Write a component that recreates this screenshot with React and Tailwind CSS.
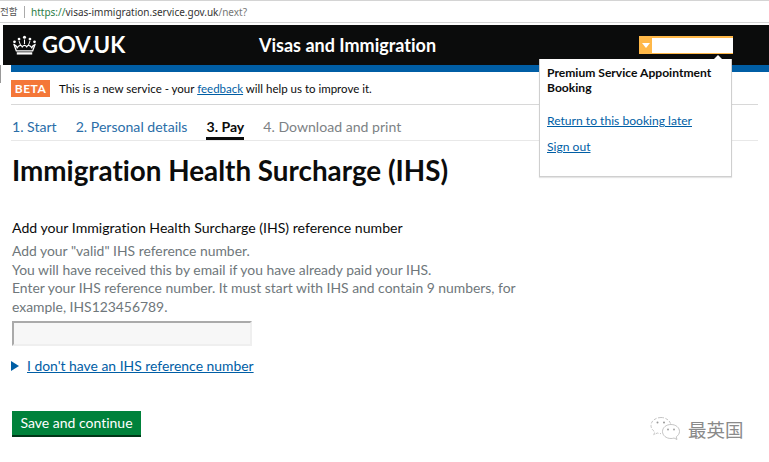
const FONT = 'font-["Lato","Liberation_Sans",sans-serif] [font-variant-ligatures:none]'

function Crown() {
  return (
    <svg viewBox="0 0 26 22" className="h-[20px] w-[25px]" fill="#fff">
      <circle cx="13" cy="2.500" r="1.700" />
      <circle cx="7" cy="4.500" r="1.500" />
      <circle cx="19" cy="4.500" r="1.500" />
      <circle cx="2" cy="7.500" r="1.500" />
      <circle cx="24" cy="7.500" r="1.500" />
      <path d="M12.400 5h1.200v5h-1.200zM6.500 6.500h1l1.600 4.500H8zM18.500 6.500h1L18 11h-1.100z" />
      <path d="M1.500 10.500c2 .5 3 2 3.500 3.500 1-1.500 2-2.500 3.500-2.500.8 0 1.500.5 2 1.500.8-1 1.600-1.500 2.500-1.500s1.700.5 2.500 1.500c.5-1 1.200-1.500 2-1.500 1.500 0 2.500 1 3.500 2.500.5-1.500 1.500-3 3.500-3.500l-2.500 7H4z" fill="none" stroke="#fff" strokeWidth="1.400" />
      <path d="M4.500 19h17v2.500h-17z" />
    </svg>
  )
}

function WeChat() {
  return (
    <svg viewBox="0 0 32 26" className="h-[26px] w-[32px]" fill="none" stroke="#b5b5b5" strokeWidth="0.8">
      <path d="M11 1.500C5.500 1.500 1 5 1 9.500c0 2.700 1.600 4.800 3.800 6.300l-1 3 3.500-1.800c1.200.4 2.500.6 3.700.6" strokeDasharray="3 1.500" />
      <path d="M11 1.500c4.500 0 8.500 2.500 9.500 6.200" strokeDasharray="3 1.500" />
      <path d="M21 8.500c-5 0-8.500 3.200-8.500 7s3.500 7 8.500 7c1 0 2-.1 3-.5l3 1.500-.8-2.600c2-1.400 3.300-3.300 3.300-5.400 0-3.800-3.500-7-8.500-7z" />
      <circle cx="7.500" cy="6.500" r="1" fill="#999" stroke="none" />
      <circle cx="14" cy="6.500" r="1" fill="#999" stroke="none" />
      <circle cx="18" cy="13.500" r="0.900" fill="#999" stroke="none" />
      <circle cx="24" cy="13.500" r="0.900" fill="#999" stroke="none" />
    </svg>
  )
}

export default function App() {
  return (
    <div className={`relative h-[462px] w-[769px] overflow-hidden bg-white ${FONT} text-[#0b0c0c]`}>
      {/* browser address bar */}
      <div className="flex h-[23px] items-center border-y border-[#d4d4d4] font-['Noto_Sans',sans-serif] text-[10px] leading-none">
        <span className="w-[18px] shrink-0 whitespace-nowrap font-['Noto_Sans_CJK_KR',sans-serif] text-[9.500px] text-[#555]">전함</span>
        <span className="ml-[6px] mr-[6px] h-[12px] w-px bg-[#aaa]" />
        <span className="text-[#2a7d46]">https://</span>
        <span className="text-[#333]">visas-immigration.service.gov.uk</span>
        <span className="text-[#777]">/next?</span>
      </div>

      {/* header */}
      <div className="ml-[3px] mt-[2px] flex h-[40px] items-center bg-[#0b0c0c] pl-[9px] pr-[36px]">
        <div className="flex w-[247px] items-center gap-[5px]">
          <Crown />
          <span className="text-[22px] font-bold leading-none text-white">GOV.UK</span>
        </div>
        <span className="text-[18px] font-bold leading-none text-white">Visas and Immigration</span>
        <div className="ml-auto flex h-[18px] w-[94px] items-center bg-[#ffb848] pl-[3px]">
          <span className="h-0 w-0 border-x-[4px] border-t-[5px] border-x-transparent border-t-white" />
          <span className="ml-[2px] h-[15px] w-[81px] bg-white" />
        </div>
      </div>

      <div className="flex h-[36px] flex-col">
        <div className="ml-[11px] h-[7px] bg-[#005ea5]" />
        <div className="mx-[11px] flex items-center gap-[9px] pt-[8px]">
          <span className="flex h-[17px] w-[39px] items-center justify-center bg-[#f47738] text-[12px] font-bold tracking-[0.5px] text-white">BETA</span>
          <span className="text-[11.500px] leading-none">
            This is a new service - your <a href="#" className="text-[#005ea5] underline">feedback</a> will help us to improve it.
          </span>
        </div>
      </div>

      <div className="mx-[11px] mt-[3px] border-t border-[#d8d8d8]">
        <div className="flex h-[36px] items-end gap-[19px] border-b border-[#e8e8e8] text-[14.100px] leading-none">
          <span className="pb-[6px] pl-px text-[#2b6ea8]">1. Start</span>
          <span className="pb-[6px] text-[#2b6ea8]">2. Personal details</span>
          <span className="border-b-[3px] border-[#0b0c0c] pb-[3px] font-bold">3. Pay</span>
          <span className="pb-[6px] text-[#7d8285]">4. Download and print</span>
        </div>
      </div>

      <main className="px-[12px]">
        <h1 className="mt-[14px] text-[27.800px] font-bold leading-[32px]">Immigration Health Surcharge (IHS)</h1>
        <p className="mt-[32px] text-[14.100px] leading-[18px]">Add your Immigration Health Surcharge (IHS) reference number</p>
        <div className="mt-[5px] w-[510px] text-[13.900px] leading-[18.500px] text-[#6f777b]">
          <p>Add your "valid" IHS reference number.</p>
          <p>You will have received this by email if you have already paid your IHS.</p>
          <p>Enter your IHS reference number. It must start with IHS and contain 9 numbers, for example, IHS123456789.</p>
        </div>
        <input className="mt-[5px] block h-[25px] w-[240px] border-2 border-b-[#efefef] border-l-[#aaa] border-r-[#efefef] border-t-[#aaa] bg-[#f7f7f7]" />
        <div className="mt-[11px] flex items-center gap-[7px]">
          <span className="-ml-px h-0 w-0 border-y-[5px] border-l-[8px] border-y-transparent border-l-[#005ea5]" />
          <a href="#" className="ml-px text-[13.900px] leading-[18px] text-[#005ea5] underline">I don't have an IHS reference number</a>
        </div>
        <button className="mt-[36px] block h-[26px] w-[129px] border-b-2 border-[#003618] bg-[#00823b] text-[14px] leading-none text-white">
          Save and continue
        </button>
      </main>

      {/* account dropdown */}
      <div className="absolute left-[539px] top-[59px] h-[118px] w-[193px] border border-t-0 border-[#cfcfcf] bg-white px-[7px] pt-[6px] text-[12.100px] leading-[15px] shadow-[0_1px_1px_rgba(0,0,0,0.1)]">
        <span className="absolute -top-[4px] left-[174px] h-0 w-0 border-x-[4px] border-b-[4px] border-x-transparent border-b-white" />
        <p className="font-bold">Premium Service Appointment Booking</p>
        <a href="#" className="mt-[18px] block text-[#005ea5] underline">Return to this booking later</a>
        <a href="#" className="mt-[11px] block text-[#005ea5] underline">Sign out</a>
      </div>

      {/* leftover edge of the browser window */}
      <span className="absolute left-0 top-[65px] h-[18px] w-px bg-[#999]" />

      {/* watermark */}
      <div className="absolute left-[650px] top-[416px] flex items-center gap-[6px]">
        <WeChat />
        <span className="font-['Noto_Sans_CJK_SC',sans-serif] text-[18.500px] leading-none text-[#8a8a8a]">最英国</span>
      </div>
    </div>
  )
}
